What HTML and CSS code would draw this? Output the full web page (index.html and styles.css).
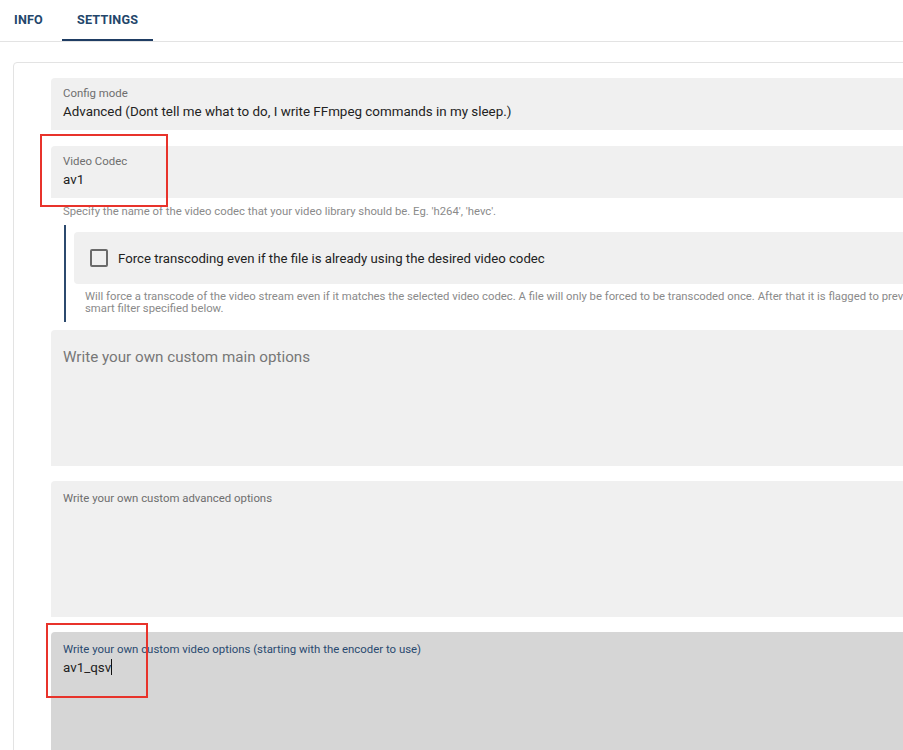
FILE: index.html
```html
<!DOCTYPE html>
<html lang="en">
<head>
  <meta charset="UTF-8">
  <title>Settings</title>
  <link rel="stylesheet" href="styles.css">
</head>
<body>

<div class="tabs">
  <div class="tab tab-info">INFO</div>
  <div class="tab tab-active">SETTINGS</div>
</div>

<div class="card">
  <div class="field">
    <div class="field-label">Config mode</div>
    <div class="field-value">Advanced (Dont tell me what to do, I write FFmpeg commands in my sleep.)</div>
  </div>

  <div class="field field-gap">
    <div class="field-label">Video Codec</div>
    <div class="field-value">av1</div>
  </div>
  <div class="hint">Specify the name of the video codec that your video library should be. Eg. 'h264', 'hevc'.</div>

  <div class="sub-section">
    <label class="check-field">
      <span class="checkbox"></span>
      <span class="check-label">Force transcoding even if the file is already using the desired video codec</span>
    </label>
    <div class="hint sub-hint">Will force a transcode of the video stream even if it matches the selected video codec. A file will only be forced to be transcoded once. After that it is flagged to prevent it being caught by the<br>smart filter specified below.</div>
  </div>

  <div class="area">
    <div class="area-placeholder">Write your own custom main options</div>
  </div>

  <div class="area">
    <div class="field-label">Write your own custom advanced options</div>
  </div>

  <div class="area area-focused">
    <div class="field-label">Write your own custom video options (starting with the encoder to use)</div>
    <div class="field-value">av1_qsv<span class="caret"></span></div>
  </div>
</div>

<div class="mark mark-codec"></div>
<div class="mark mark-video"></div>

</body>
</html>
```

FILE: styles.css
```css
body {
  margin: 0;
  font-family: Roboto, "Noto Sans", sans-serif;
  background: #fff;
  overflow: hidden;
  width: 903px;
  height: 750px;
  position: relative;
}

.tabs {
  display: flex;
  height: 42px;
  border-bottom: 1px solid #e3e3e3;
  box-sizing: border-box;
}
.tab {
  font-size: 12.6px;
  font-weight: 700;
  color: #23466b;
  padding: 0 15px;
  line-height: 39px;
  letter-spacing: 0.2px;
  box-sizing: border-box;
}
.tab-info { padding: 0 19px 0 14px; }
.tab-active { border-bottom: 2px solid #1f3d63; }

.card {
  margin: 20px 0 0 13px;
  border: 1px solid #e3e3e3;
  border-radius: 4px;
  padding: 15px 37px 0;
  width: 1100px;
  height: 900px;
}

.field {
  background: #f0f0f0;
  border-radius: 4px 4px 0 0;
  height: 52px;
  box-sizing: border-box;
  padding: 9px 12px 0;
}
.field-gap { margin-top: 16px; }

.field-label {
  font-size: 11.4px;
  line-height: 13px;
  color: #6e6e6e;
}
.field-value {
  font-size: 13.4px;
  line-height: 18px;
  margin-top: 3px;
  color: #222;
}

.hint {
  font-size: 11.3px;
  line-height: 12px;
  color: #8a8a8a;
  padding: 8px 12px 0;
  white-space: nowrap;
}

.sub-section {
  margin: 7px 0 0 13px;
  border-left: 2px solid #2c4a6e;
  padding: 7px 0 7px 8px;
}
.check-field {
  display: flex;
  align-items: center;
  background: #f0f0f0;
  border-radius: 4px;
  height: 52px;
  padding-left: 16px;
}
.checkbox {
  width: 14px;
  height: 14px;
  border: 2px solid #6a6a6a;
  border-radius: 2px;
}
.check-label {
  font-size: 13.2px;
  color: #222;
  margin-left: 10px;
}
.sub-hint {
  padding: 7px 11px 0;
}

.area {
  background: #f0f0f0;
  border-radius: 4px 4px 0 0;
  height: 136px;
  box-sizing: border-box;
  padding: 11px 12px 0;
  margin-top: 15px;
}
.sub-section + .area { margin-top: 8px; }
.area-placeholder {
  font-size: 15.2px;
  color: #777;
  padding-top: 7px;
}
.area-focused {
  background: #d6d6d6;
  height: 300px;
}
.area-focused .field-label { color: #2a4a70; }
.caret {
  display: inline-block;
  width: 1px;
  height: 16px;
  background: #111;
  vertical-align: -3px;
}

.mark {
  position: absolute;
  border: 2px solid #e8332b;
  box-sizing: border-box;
}
.mark-codec { left: 40px; top: 134px; width: 128px; height: 73px; }
.mark-video { left: 46px; top: 623px; width: 102px; height: 75px; }
```
